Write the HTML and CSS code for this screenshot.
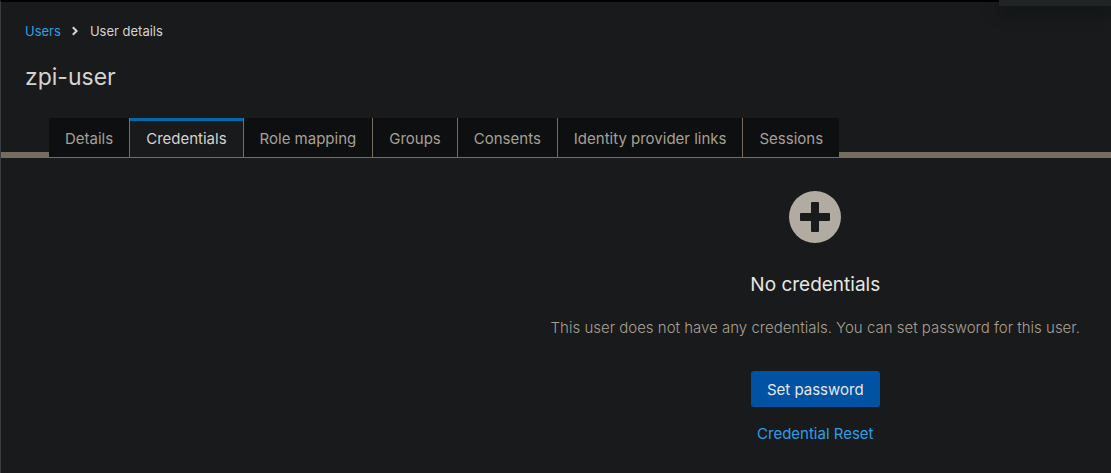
FILE: index.html
```html
<!DOCTYPE html>
<html lang="en">
<head>
<meta charset="utf-8">
<title>User details</title>
<link rel="stylesheet" href="styles.css">
</head>
<body>
<div class="popover"></div>
<main class="page">
  <header class="header">
    <nav class="breadcrumb" aria-label="Breadcrumb">
      <a class="link" href="#">Users</a>
      <svg class="chevron" viewBox="0 0 8 10" aria-hidden="true"><path d="M1.8 1.2 5.6 5 1.8 8.8"/></svg>
      <span>User details</span>
    </nav>
    <h1 class="title">zpi-user</h1>
  </header>
  <div class="tabs" role="tablist">
    <button class="tab" role="tab">Details</button>
    <button class="tab tab-current" role="tab" aria-selected="true">Credentials</button>
    <button class="tab" role="tab">Role mapping</button>
    <button class="tab" role="tab">Groups</button>
    <button class="tab" role="tab">Consents</button>
    <button class="tab" role="tab">Identity provider links</button>
    <button class="tab" role="tab">Sessions</button>
  </div>
  <section class="empty">
    <svg class="plus" viewBox="0 0 52 52" aria-hidden="true"><circle cx="26" cy="26" r="26"/><path d="M23 11h6q1 0 1 1v10h10q1 0 1 1v6q0 1-1 1H30v10q0 1-1 1h-6q-1 0-1-1V30H12q-1 0-1-1v-6q0-1 1-1h10V12q0-1 1-1z"/></svg>
    <h2 class="empty-title">No credentials</h2>
    <p class="empty-text">This user does not have any credentials. You can set password for this user.</p>
    <button class="primary">Set password</button>
    <button class="link reset">Credential Reset</button>
  </section>
</main>
</body>
</html>
```
FILE: styles.css
```css
* { box-sizing: border-box; }
body {
  margin: 0;
  background: #181a1b;
  color: #d6d3cd;
  font-family: Inter, "Open Sans", sans-serif;
  font-size: 15px;
  line-height: 24px;
}
button {
  font: inherit;
  border: 0;
  margin: 0;
  cursor: pointer;
}
.page {
  display: flex;
  flex-direction: column;
  min-height: 100vh;
  border-top: 2px solid #000;
  border-left: 1px solid #3b3e40;
  overflow: hidden;
}
.popover {
  position: absolute;
  top: 0;
  right: 0;
  width: 112px;
  height: 6px;
  background: #1f2424;
  box-shadow: 0 6px 16px rgba(0, 0, 0, 0.5);
}
.header { padding: 19px 24px 0; }
.breadcrumb {
  display: flex;
  align-items: center;
  font-size: 13px;
  line-height: 20px;
}
.link { color: #2e9fe6; text-decoration: none; background: none; }
.chevron {
  width: 8px;
  height: 10px;
  margin: 0 11px 0 10px;
  fill: none;
  stroke: #d6d3cd;
  stroke-width: 2;
}
.title {
  margin: 20px 0 0;
  font-size: 23px;
  line-height: 32px;
  font-weight: 400;
}
.tabs {
  display: flex;
  margin-top: 25px;
  padding-left: 48px;
  background: linear-gradient(#766d60, #766d60) bottom / 100% 6px no-repeat;
}
.tab {
  height: 40px;
  padding: 2px 16px 0;
  color: #a8a095;
  background: #0d0f10;
  border-right: 1px solid #766d60;
  border-bottom: 1px solid #766d60;
}
.tab:last-child { border-right: 0; }
.tab-current {
  color: #d6d3cd;
  background: #181a1b;
  box-shadow: inset 0 3px #0069aa;
}
.empty {
  display: flex;
  flex-direction: column;
  align-items: center;
  align-self: flex-end;
  padding: 33px 31px 24px;
}
.plus { width: 52px; height: 52px; }
.plus circle { fill: #b2aba1; }
.plus path { fill: #181a1b; }
.empty-title {
  margin: 26px 0 0;
  color: #e8e6e3;
  font-size: 19px;
  line-height: 32px;
  font-weight: 400;
}
.empty-text { margin: 15px 0 0; color: #a8a095; font-weight: 300; }
.primary {
  margin-top: 31px;
  padding: 7px 16px 5px;
  color: #e8e6e3;
  background: #0052a3;
  border-radius: 3px;
}
.reset { margin-top: 8px; padding: 7px 16px 5px; }
```
